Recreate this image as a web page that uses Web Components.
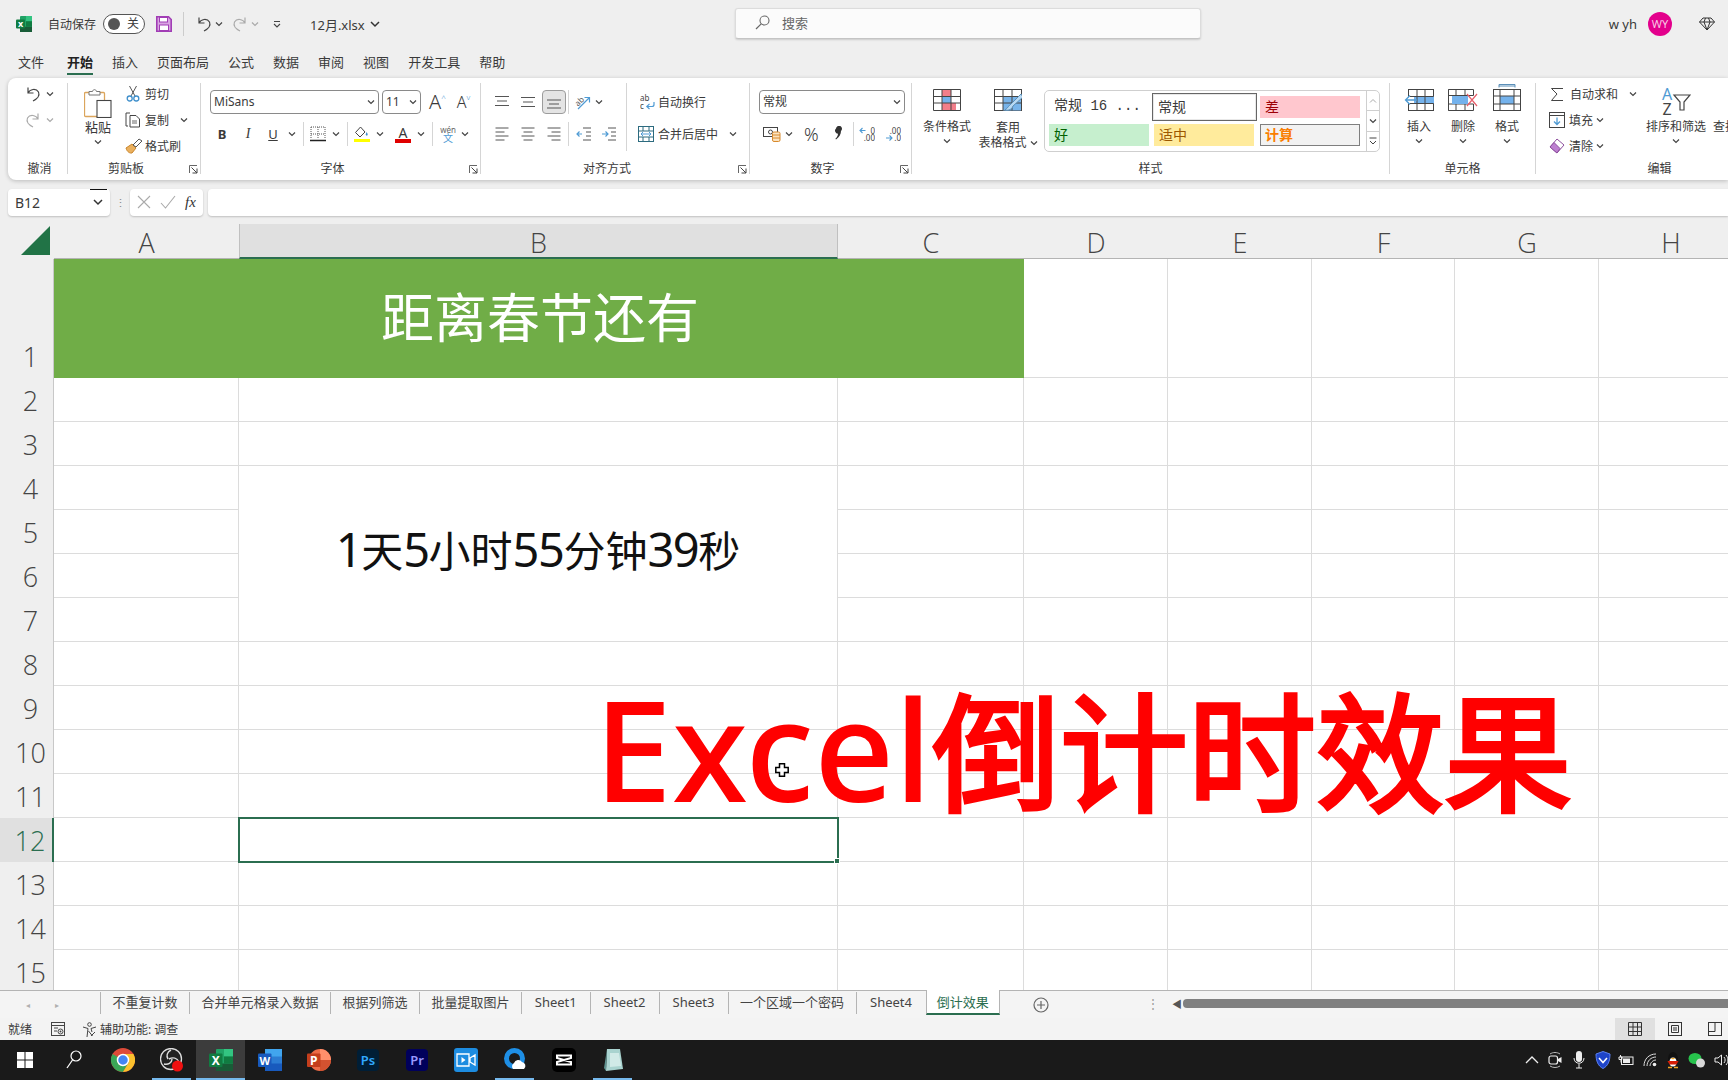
<!DOCTYPE html>
<html lang="zh">
<head>
<meta charset="utf-8">
<title>Excel</title>
<style>
    html, body { margin: 0; padding: 0; }
    body {
        width: 1728px;
        height: 1080px;
        overflow: hidden;
        background: #efefef;
        color: #3a3a3a;
        font-family: "Noto Sans", "Noto Sans CJK SC", sans-serif;
        font-size: 12px;
        display: flex;
        flex-direction: column;
    }
</style>
</head>
<body>
<x-titlebar></x-titlebar>
<x-menubar></x-menubar>
<x-ribbon></x-ribbon>
<x-formulabar></x-formulabar>
<x-sheet></x-sheet>
<x-tabbar></x-tabbar>
<x-statusbar></x-statusbar>
<x-taskbar></x-taskbar>

<script>
const BL = '#4f9bd4';
const GREEN = '#2b6e50';
const TXT = 'font-family="Noto Sans,sans-serif"';
// name: [width, height, svg inner]
const ICONS = {
    chev: [8, 8, `<path d="M1 2.5l3 3 3-3" fill="none" stroke="#444" stroke-width="1.2"/>`],
    chevg: [8, 8, `<path d="M1 2.5l3 3 3-3" fill="none" stroke="#aaa" stroke-width="1.2"/>`],
    chev10: [10, 8, `<path d="M1 2l4 4 4-4" fill="none" stroke="#333" stroke-width="1.5"/>`],
    undo: [16, 16, `<path d="M3 1.5V7h5.5M3 7C5 3 11 2 13.5 6c1.6 3.5-1.5 7-5.5 9" fill="none" stroke="#444" stroke-width="1.2"/>`],
    redo: [16, 16, `<path d="M13 1.5V7H7.5M13 7C11 3 5 2 2.5 6c-1.6 3.5 1.5 7 5.5 9" fill="none" stroke="#aaa" stroke-width="1.2"/>`],
    qat: [10, 10, `<path d="M2 2.5h6M2 5l3 3 3-3" fill="none" stroke="#444" stroke-width="1.1"/>`],
    xl: [16, 16, `<rect x="4" y="0" width="12" height="16" rx="1" fill="#21a366"/><rect x="10" y="0" width="6" height="5.3" fill="#33c481"/><rect x="4" y="10.7" width="12" height="5.3" fill="#185c37"/><rect x="10" y="5.3" width="6" height="5.4" fill="#107c41"/><rect x="0" y="3.5" width="9" height="9" rx="1" fill="#107c41"/><text x="4.5" y="10.8" text-anchor="middle" font-size="9" font-weight="700" fill="#fff" ${TXT}>x</text>`],
    save: [16, 16, `<path d="M.8.8h11.7l2.7 2.7v11.7H.8z" fill="#d9a6e2" stroke="#a13db5" stroke-width="1.6"/><rect x="3.5" y="1.5" width="8" height="4.5" fill="#fff" stroke="#a13db5"/><rect x="3.5" y="9" width="9" height="5.5" fill="#fff" stroke="#a13db5"/>`],
    search: [15, 15, `<circle cx="9.5" cy="5.5" r="4.5" fill="none" stroke="#666" stroke-width="1.1"/><path d="M6.2 8.8L1 14" stroke="#666" stroke-width="1.2"/>`],
    gem: [16, 14, `<path d="M4 1h8l3.5 4L8 13 .5 5zM.5 5h15M5 5l3 8 3-8M5 5l1.5-4M11 5L9.5 1" fill="none" stroke="#333" stroke-width="1"/>`],
    paste: [28, 30, `<rect x=".5" y="4.5" width="20" height="24" rx="1" fill="#fff" stroke="#dba55c" stroke-width="1.3"/><path d="M5 7V3.5h3.5C9 1 12 1 12.5 3.5H16V7z" fill="#fff" stroke="#777"/><rect x="13" y="12.5" width="14" height="17" fill="#fff" stroke="#444" stroke-width="1.1"/>`],
    cut: [14, 16, `<path d="M3.5 0l5.5 10M10.5 0L5 10" stroke="#555" fill="none"/><circle cx="3.7" cy="12.5" r="2.5" fill="none" stroke="#3f8fcb" stroke-width="1.3"/><circle cx="10.3" cy="12.5" r="2.5" fill="none" stroke="#3f8fcb" stroke-width="1.3"/>`],
    copy: [16, 16, `<path d="M5 1H1v13h2" fill="none" stroke="#444"/><path d="M5 3.5h6l3.5 3.5v8H5z" fill="#fff" stroke="#444"/><path d="M7 9h5M7 11h5" stroke="#666"/>`],
    brush: [18, 16, `<path d="M1 10l6-4 4 4-4 5c-2 .5-5-1-6-5z" fill="#eab05e" stroke="#c8842a"/><path d="M8 7l6-6 3 2-6 6z" fill="#fff" stroke="#555"/>`],
    border: [16, 16, `<path d="M1 1h14M1 8h14M1 1v12M8 1v12M15 1v12" stroke="#555" stroke-dasharray="1 1" fill="none"/><path d="M0 14.5h16" stroke="#222" stroke-width="1.3"/>`],
    fill: [16, 16, `<path d="M6.5 1L1.5 6.5 6 11l5-5z" fill="#fff" stroke="#444"/><path d="M12.5 6c1 1.5 1.5 2.3 1 3.3-.7.7-1.8.2-1.8-.8z" fill="#3f8fcb"/><rect y="13" width="16" height="3.5" fill="#ffff00"/>`],
    al1: [16, 16, `<path d="M1 2.5h14M3 7h10M1 11.5h14" stroke="#555" fill="none"/>`],
    al2: [16, 16, `<path d="M1 3.5h14M3 8h10M1 12.5h14" stroke="#555" fill="none"/>`],
    al3: [16, 16, `<path d="M1 6h14M3 10h10M1 14h14" stroke="#555" fill="none"/>`],
    left: [16, 16, `<path d="M1.5 2h13M1.5 6h9M1.5 10h13M1.5 14h9" stroke="#555" fill="none"/>`],
    center: [16, 16, `<path d="M1.5 2h13M3.5 6h9M1.5 10h13M3.5 14h9" stroke="#555" fill="none"/>`],
    right: [16, 16, `<path d="M1.5 2h13M5.5 6h9M1.5 10h13M5.5 14h9" stroke="#555" fill="none"/>`],
    orient: [16, 16, `<text x="5" y="10" transform="rotate(-45 5 8)" text-anchor="middle" font-size="8" fill="#555" ${TXT}>ab</text><path d="M3 15L14 4M9.5 3.5H14.5V8.5" fill="none" stroke="${BL}" stroke-width="1.2"/>`],
    outdent: [16, 16, `<path d="M7 2h8M10 6h5M10 10h5M7 14h8" stroke="#555"/><path d="M6 8H1M3.5 5.5L1 8l2.5 2.5" fill="none" stroke="${BL}" stroke-width="1.2"/>`],
    indent: [16, 16, `<path d="M7 2h8M10 6h5M10 10h5M7 14h8" stroke="#555"/><path d="M1 8h6M4.5 5.5L7 8l-2.5 2.5" fill="none" stroke="${BL}" stroke-width="1.2"/>`],
    wrap: [16, 16, `<text x="0" y="7" font-size="8" fill="#444" ${TXT}>ab</text><text x="0" y="15" font-size="8" fill="#444" ${TXT}>c</text><path d="M14 8v2.5a2 2 0 0 1-2 2H7M9.5 9.8L6.8 12.5 9.5 15" fill="none" stroke="${BL}" stroke-width="1.2"/>`],
    merge: [16, 16, `<rect x=".5" y=".5" width="15" height="15" fill="#fff" stroke="#2c6b7f"/><path d="M.5 5h15M.5 11h15M5 .5V5M11 .5V5M5 11v4.5M11 11v4.5" stroke="#2c6b7f" fill="none"/><path d="M3 8h10M5 6L3 8l2 2M11 6l2 2-2 2" fill="none" stroke="${BL}"/>`],
    money: [18, 16, `<rect x=".5" y="1.5" width="14" height="9" fill="#fff" stroke="#444"/><circle cx="7.5" cy="6" r="2" fill="none" stroke="#444"/><rect x="9.5" y="6" width="7.5" height="9.5" rx="1.5" fill="#fbe3c0" stroke="#d88a2d"/><path d="M9.5 9h7.5M9.5 12h7.5" stroke="#d88a2d"/>`],
    comma: [16, 16, `<path d="M6 2.5a3 3 0 1 1 5 2.5c0 3-1.5 6-5 8.5l-.6-.8c1.5-1.3 2.5-3 2.6-5A3 3 0 0 1 6 2.5z" fill="#333"/>`],
    deca: [16, 16, `<path d="M6.5 4.5H1M3.5 2L1 4.5 3.5 7" fill="none" stroke="${BL}" stroke-width="1.1"/><text x="16" y="7.5" text-anchor="end" font-size="8" fill="#444" ${TXT}>0</text><text x="16" y="15" text-anchor="end" font-size="8" fill="#444" ${TXT}>.00</text>`],
    decb: [16, 16, `<text x="16" y="7.5" text-anchor="end" font-size="8" fill="#444" ${TXT}>.00</text><path d="M1 12h6M4.5 9.5L7 12l-2.5 2.5" fill="none" stroke="${BL}" stroke-width="1.1"/><text x="16" y="15" text-anchor="end" font-size="8" fill="#444" ${TXT}>.0</text>`],
    cf: [28, 22, `<rect x=".5" y=".5" width="27" height="21" fill="#fff"/><rect x="9" y="1" width="9" height="6.5" fill="#f27e8a"/><rect x="9" y="7.5" width="9" height="6.5" fill="#74b2ec"/><rect x="9" y="14" width="14" height="7.5" fill="#f27e8a"/><path d="M.5 .5h27v21H.5zM9 .5v21M18 .5v21M.5 7.5h27M.5 14h27" stroke="#444" fill="none"/>`],
    tbl: [28, 22, `<rect x=".5" y=".5" width="27" height="21" fill="#fff" stroke="#444"/><rect x="9" y="7.5" width="18" height="14" fill="#78b4ea"/><path d="M9 .5v21M18 .5v21M.5 7.5h27M.5 14h27" stroke="#444" fill="none"/><path d="M27 5L17 15c-2 1-3 4-6 6 4 1 7-1 8-4L29 8z" fill="#b9d9f2" stroke="#5b8fb8"/>`],
    cins: [30, 22, `<rect x="4.5" y=".5" width="25" height="21" fill="#fff" stroke="#444"/><rect x="10" y="7.5" width="20" height="7" fill="#74b2ec"/><path d="M13 .5v21M21 .5v21M4.5 7.5h25M4.5 14.5h25" stroke="#444" fill="none"/><path d="M13 11H1.5M6 6.5L1.5 11 6 15.5" fill="#fff" stroke="${BL}" stroke-width="1.3"/>`],
    cdel: [30, 22, `<path d="M.5 .5h25v6h-25zM.5 15h25v6.5H.5z" fill="#fff" stroke="#444"/><path d="M8 .5v21M17 .5v21M.5 .5v21" stroke="#444" fill="none"/><rect x="4" y="7" width="16" height="8" fill="#74b2ec"/><path d="M19 5l10 12M29 5L19 17" stroke="#e8606c" stroke-width="1.2"/>`],
    cfmt: [28, 28, `<path d="M6 .5h16M6 .5v3M22 .5v3M6 2h16" stroke="#5b8fb8" fill="none"/><rect x=".5" y="5.5" width="27" height="21" fill="#fff" stroke="#444"/><rect x="7" y="12" width="14" height="8" fill="#74b2ec"/><path d="M7 5.5v21M21 5.5v21M.5 12h27M.5 20h27" stroke="#444" fill="none"/>`],
    sum: [14, 14, `<path d="M13 1.5H1.5L7 7l-5.5 6.5H13" fill="none" stroke="#444"/>`],
    filld: [16, 16, `<rect x=".5" y=".5" width="15" height="15" fill="#fff" stroke="#444"/><path d="M.5 3.5h15" stroke="#444"/><path d="M8 5.5v7M5 9.5l3 3 3-3" fill="none" stroke="${BL}" stroke-width="1.3"/>`],
    erase: [16, 16, `<path d="M1 9l7-8 7 6-7 8z" fill="#fff" stroke="#8d4f9e"/><path d="M1 9l4-4.5 6 6L8 15z" fill="#bd7fd0" stroke="#8d4f9e"/>`],
    sort: [30, 28, `<text x="6" y="12" text-anchor="middle" font-size="16" fill="#4f9bd4" ${TXT}>A</text><text x="6" y="27" text-anchor="middle" font-size="16" fill="#444" ${TXT}>Z</text><path d="M13 7h16l-6 7v8h-4v-8z" fill="#fff" stroke="#444" stroke-width="1.2"/>`],
    launch: [9, 9, `<path d="M.5 8V.5H8" fill="none" stroke="#666"/><path d="M2.5 2.5L8 8M8 3.5V8H3.5" fill="none" stroke="#444"/>`],
    gup: [8, 8, `<path d="M1 5.5l3-3 3 3" fill="none" stroke="#aaa"/>`],
    gmore: [8, 9, `<path d="M.5 1h7M1 4l3 3 3-3" fill="none" stroke="#444"/>`],
    close: [14, 14, `<path d="M1 1l12 12M13 1L1 13" stroke="#aaa" stroke-width="1.1"/>`],
    check: [16, 14, `<path d="M1 8l4.5 5L15 1" fill="none" stroke="#aaa" stroke-width="1.1"/>`],
    plus: [16, 16, `<circle cx="8" cy="8" r="7" fill="none" stroke="#666" stroke-width="1.2"/><path d="M8 4v8M4 8h8" stroke="#666" stroke-width="1.2"/>`],
    macro: [14, 14, `<rect x=".5" y=".5" width="13" height="13" fill="none" stroke="#444"/><path d="M.5 3.5h13M3 6h4M3 9h3" stroke="#444"/><circle cx="9.5" cy="9.5" r="2.5" fill="none" stroke="#444"/><circle cx="9.5" cy="9.5" r="1" fill="#444"/>`],
    access: [15, 15, `<circle cx="7.5" cy="2.5" r="1.8" fill="none" stroke="#444"/><path d="M1 5l5 1.5L5 15M14 5L9 6.5 10 10M6.5 9l4 5M13 10l-4 4" fill="none" stroke="#444"/>`],
    vnormal: [14, 14, `<path d="M.5 .5h13v13H.5zM.5 5h13M.5 9.5h13M5 .5v13M9.5 .5v13" fill="none" stroke="#333"/>`],
    vpage: [14, 14, `<rect x=".5" y=".5" width="13" height="13" fill="none" stroke="#333"/><path d="M3.5 3.5h7v7h-7zM5 6h4M5 8h4" fill="none" stroke="#333"/>`],
    vbreak: [14, 14, `<rect x=".5" y=".5" width="13" height="13" fill="none" stroke="#333"/><path d="M.5 9.5H7V.5" fill="none" stroke="#333"/>`],
    cursor: [14, 14, `<path d="M4.5 .8h5v3.7h3.7v5H9.5v3.7h-5V9.5H.8v-5h3.7z" fill="#fff" stroke="#000" stroke-width="1.5"/>`],
    win: [16, 16, `<path d="M0 0h7.5v7.5H0zM8.5 0H16v7.5H8.5zM0 8.5h7.5V16H0zM8.5 8.5H16V16H8.5z" fill="#fff"/>`],
    tsearch: [16, 20, `<circle cx="10" cy="6" r="5" fill="none" stroke="#fff" stroke-width="1.2"/><path d="M6.5 10L1 18" stroke="#fff" stroke-width="1.3"/>`],
    chrome: [24, 24, `<circle cx="12" cy="12" r="12" fill="#dd4b39"/><path d="M12 12L1.6 6A12 12 0 0 0 12 24l6-10z" fill="#3aa757"/><path d="M12 6h10.4A12 12 0 0 1 12 24l6-10z" fill="#fbc02d"/><circle cx="12" cy="12" r="5.5" fill="#4285f4" stroke="#fff" stroke-width="1.5"/>`],
    obs: [24, 24, `<circle cx="11" cy="11" r="10.5" fill="#222" stroke="#ddd" stroke-width="1.3"/><path d="M11 2c-4 2-5 6-3 9M19 14c-2-4-6-5-10-3M4 16c4 1 8-1 8-5" fill="none" stroke="#ddd" stroke-width="1.4"/><circle cx="17.5" cy="18" r="5.5" fill="#f01010"/>`],
    txl: [24, 24, `<rect x="7" y="1" width="17" height="22" rx="1" fill="#21a366"/><rect x="15" y="1" width="9" height="7.5" fill="#33c481"/><rect x="7" y="15.5" width="17" height="7.5" fill="#185c37"/><rect x="15" y="8.5" width="9" height="7" fill="#107c41"/><rect x="0" y="5.5" width="13.5" height="13.5" rx="1" fill="#107c41"/><text x="6.8" y="16.5" text-anchor="middle" font-size="12" font-weight="700" fill="#fff" ${TXT}>X</text>`],
    word: [24, 24, `<rect x="7" y="1" width="17" height="22" rx="1" fill="#2b7cd3"/><rect x="7" y="1" width="17" height="7.5" fill="#41a5ee"/><rect x="7" y="15.5" width="17" height="7.5" fill="#185abd"/><rect x="0" y="5.5" width="13.5" height="13.5" rx="1" fill="#185abd"/><text x="6.8" y="16.5" text-anchor="middle" font-size="11" font-weight="700" fill="#fff" ${TXT}>W</text>`],
    ppt: [24, 24, `<circle cx="13" cy="12" r="11" fill="#ed6c47"/><path d="M13 1a11 11 0 0 1 11 11H13z" fill="#ff8f6b"/><path d="M13 12h11a11 11 0 0 1-11 11z" fill="#d35230"/><rect x="0" y="5.5" width="13.5" height="13.5" rx="1" fill="#c43e1c"/><text x="6.8" y="16.5" text-anchor="middle" font-size="12" font-weight="700" fill="#fff" ${TXT}>P</text>`],
    ps: [24, 24, `<rect x="1" y="1" width="22" height="22" rx="4" fill="#001e36"/><text x="12" y="17" text-anchor="middle" font-size="13" font-weight="600" fill="#31a8ff" ${TXT}>Ps</text>`],
    pr: [24, 24, `<rect x="1" y="1" width="22" height="22" rx="4" fill="#00005b"/><text x="12" y="17" text-anchor="middle" font-size="13" font-weight="600" fill="#9999ff" ${TXT}>Pr</text>`],
    video: [24, 24, `<rect width="24" height="24" rx="3" fill="#1d8ce0"/><path d="M3 6h12v12H3zM16 10l5-3v10l-5-3z" fill="none" stroke="#fff" stroke-width="1.3"/><path d="M7.5 9l4 3-4 3z" fill="#fff"/>`],
    qq: [24, 24, `<circle cx="11.5" cy="10.5" r="8" fill="none" stroke="#1e8fe6" stroke-width="5"/><path d="M10 21a4 4 0 0 1 1-6 4.5 4.5 0 0 1 8-1 4 4 0 0 1 2 7z" fill="#fff"/>`],
    capcut: [24, 24, `<rect width="24" height="24" rx="5" fill="#000"/><path d="M5 7.5h14V10L5 14v2.5h14V14L5 10z" fill="none" stroke="#fff" stroke-width="2"/>`],
    note: [24, 24, `<path d="M6 1h13l3 20-17 2z" fill="#a9d3cf"/><path d="M6 1l-3 19 2 3z" fill="#5e9390"/><path d="M9 5h9l2 13-11 1z" fill="#e2f3f1" opacity=".7"/>`],
    tup: [14, 10, `<path d="M1 8l6-6 6 6" fill="none" stroke="#eee" stroke-width="1.3"/>`],
    tcam: [14, 18, `<path d="M2 3c3-2 7-2 10 0M2 15c3 2 7 2 10 0" fill="none" stroke="#bbb"/><rect x="1" y="5" width="8.5" height="8" rx="2" fill="none" stroke="#eee" stroke-width="1.2"/><path d="M10 8l3.5-2v6L10 10z" fill="#eee"/>`],
    tmic: [12, 18, `<rect x="3" y="0" width="6" height="11" rx="3" fill="#eee"/><path d="M1 7c0 7 10 7 10 0M6 13v4M3 17h6" fill="none" stroke="#eee"/>`],
    tshield: [16, 18, `<path d="M8 .5l7 2.5c0 7-2 12-7 14.5C3 15 1 10 1 3z" fill="#1e44c8" stroke="#5a80f0"/><path d="M4 7l4 4.5L12 7" fill="none" stroke="#fff" stroke-width="1.5"/>`],
    tbat: [16, 12, `<path d="M1 3h3v2.5H1zM2.5 1v2M3 5.5v3" stroke="#eee" fill="none"/><rect x="3.5" y="3" width="11.5" height="7.5" fill="none" stroke="#eee"/><rect x="5" y="4.5" width="7" height="4.5" fill="#eee"/>`],
    twifi: [14, 14, `<path d="M1 13C1 6 6 1 13 1M4 13c0-5 4-9 9-9M7 13c0-3 3-6 6-6" fill="none" stroke="#ddd"/><circle cx="11.5" cy="11.5" r="1.8" fill="#eee"/>`],
    tqq: [16, 18, `<ellipse cx="8" cy="8" rx="5" ry="7" fill="#111"/><ellipse cx="8" cy="11" rx="3.5" ry="4.5" fill="#fff"/><path d="M2.5 10l11 0-2 3.5h-7z" fill="#d81e06"/><path d="M5.5 7l2.5 1.5L10.5 7z" fill="#f5a623"/><path d="M3 16.5h4M9 16.5h4" stroke="#f5a623" stroke-width="1.5"/>`],
    twx: [18, 16, `<ellipse cx="7" cy="6.5" rx="6.5" ry="5.5" fill="#27c24c"/><circle cx="12.5" cy="11" r="4.5" fill="#d8d8d8"/>`],
    tvol: [14, 14, `<path d="M1 5h3l3.5-3v10L4 9H1z" fill="none" stroke="#eee"/><path d="M10 4c1.5 2 1.5 4 0 6M12 2c2.500 3 2.500 7 0 10" fill="none" stroke="#eee"/>`]
};

class XIcon extends HTMLElement {
    connectedCallback() {
        const shadow = this.shadowRoot || this.attachShadow({mode: 'open'});
        const [w, h, inner] = ICONS[this.getAttribute('n')];
        shadow.innerHTML = `
            <style>
                :host { display: inline-flex; flex: none; line-height: 0; }
            </style>
            <svg width="${w}" height="${h}" viewBox="0 0 ${w} ${h}">${inner}</svg>`;
    }
}

class XSelect extends HTMLElement {
    constructor() {
        super();
        this.attachShadow({mode: 'open'});
        this.shadowRoot.innerHTML = `
            <style>
                :host {
                    display: flex;
                    align-items: center;
                    justify-content: space-between;
                    box-sizing: border-box;
                    height: 24px;
                    padding: 0 3px;
                    background: #fff;
                    border: 1px solid #8a8a8a;
                    border-radius: 4px;
                    font-size: 12px;
                    line-height: 22px;
                }
            </style>
            <slot></slot><x-icon n="chev"></x-icon>`;
    }
}

class XGroup extends HTMLElement {
    constructor() {
        super();
        this.attachShadow({mode: 'open'});
        this.shadowRoot.innerHTML = `
            <style>
                :host {
                    display: flex;
                    flex-direction: column;
                    flex: none;
                    box-sizing: border-box;
                    height: 91px;
                    margin: 5px 0 6px;
                    border-right: 1px solid #d5d5d5;
                }
                .body { display: flex; flex: 1; min-height: 0; }
                .foot {
                    display: flex;
                    align-items: flex-start;
                    flex: none;
                    height: 12px;
                    padding-top: 1px;
                    margin-bottom: -1px;
                    line-height: 12px;
                    font-size: 12px;
                    white-space: nowrap;
                }
                .foot span { flex: 1; text-align: center; padding-left: var(--label-shift, 0); }
                .foot x-icon { width: 14px; justify-content: flex-end; margin: 2px 2px 0 0; }
            </style>
            <div class="body"><slot></slot></div>
            <div class="foot"><span id="t"></span></div>`;
    }
    connectedCallback() {
        this.shadowRoot.getElementById('t').textContent = this.getAttribute('label');
        if (this.hasAttribute('launch')) {
            const i = document.createElement('x-icon');
            i.setAttribute('n', 'launch');
            this.shadowRoot.querySelector('.foot').appendChild(i);
        }
    }
}

class XBigBtn extends HTMLElement {
    constructor() {
        super();
        this.attachShadow({mode: 'open'});
        this.shadowRoot.innerHTML = `
            <style>
                :host {
                    display: flex;
                    flex-direction: column;
                    align-items: center;
                    flex: none;
                    padding-top: 6px;
                    font-size: 12px;
                    line-height: 14px;
                    white-space: nowrap;
                    text-align: center;
                }
                .ic { height: 31px; display: flex; align-items: flex-start; }
                .ar { height: 14px; display: flex; align-items: center; }
            </style>
            <div class="ic"><slot></slot></div>
            <slot name="label"></slot>
            <div class="ar" id="ar"><x-icon n="chev"></x-icon></div>`;
    }
    connectedCallback() {
        if (this.hasAttribute('noarrow')) this.shadowRoot.getElementById('ar').remove();
    }
}

class XTitlebar extends HTMLElement {
    constructor() {
        super();
        this.attachShadow({mode: 'open'});
        this.shadowRoot.innerHTML = `
            <style>
                :host {
                    display: flex;
                    flex: none;
                    align-items: center;
                    height: 48px;
                    font-size: 12px;
                    white-space: nowrap;
                }
                .left { display: flex; align-items: center; width: 735px; flex: none; padding-left: 16px; box-sizing: border-box; }
                .toggle {
                    display: flex;
                    align-items: center;
                    box-sizing: border-box;
                    width: 42px;
                    height: 20px;
                    margin-left: 7px;
                    padding: 0 4px;
                    border: 1px solid #555;
                    border-radius: 10px;
                    background: #fff;
                    gap: 7px;
                    font-size: 12px;
                    line-height: 18px;
                }
                .toggle i { width: 12px; height: 12px; border-radius: 50%; background: #555; }
                .sep { width: 1px; height: 24px; background: #ccc; margin: 0 12px 0 11px; }
                .search {
                    display: flex;
                    align-items: center;
                    box-sizing: border-box;
                    width: 466px;
                    height: 31px;
                    margin-top: -1px;
                    padding: 0 0 2px 19px;
                    gap: 12px;
                    background: #fbfbfb;
                    border-radius: 3px;
                    border: 1px solid #dcdcdc;
                    border-bottom-color: #c4c4c4;
                    box-shadow: 0 1px 2px rgba(0,0,0,.15);
                    color: #666;
                    font-size: 13px;
                }
                .right { display: flex; align-items: center; flex: 1; justify-content: flex-end; padding-right: 13px; }
                .avatar {
                    width: 24px;
                    height: 24px;
                    margin: 0 27px 0 11px;
                    border-radius: 50%;
                    background: #e3008c;
                    color: #f8c8e4;
                    font-size: 11px;
                    line-height: 24px;
                    text-align: center;
                }
            </style>
            <div class="left">
                <x-icon n="xl"></x-icon>
                <span style="margin-left:16px">自动保存</span>
                <div class="toggle"><i></i><span>关</span></div>
                <x-icon n="save" style="margin-left:11px"></x-icon>
                <div class="sep"></div>
                <x-icon n="undo"></x-icon>
                <x-icon n="chev" style="margin-left:3px"></x-icon>
                <x-icon n="redo" style="margin-left:9px"></x-icon>
                <x-icon n="chevg" style="margin-left:3px"></x-icon>
                <x-icon n="qat" style="margin-left:13px"></x-icon>
                <span style="margin-left:28px;font-size:13px">12月.xlsx</span>
                <x-icon n="chev10" style="margin-left:5px"></x-icon>
            </div>
            <div class="search"><x-icon n="search"></x-icon><span>搜索</span></div>
            <div class="right">
                <span style="font-size:13px">w yh</span>
                <div class="avatar">WY</div>
                <x-icon n="gem"></x-icon>
            </div>`;
    }
}

class XMenubar extends HTMLElement {
    constructor() {
        super();
        this.attachShadow({mode: 'open'});
        const items = ['文件', '开始', '插入', '页面布局', '公式', '数据', '审阅', '视图', '开发工具', '帮助'];
        this.shadowRoot.innerHTML = `
            <style>
                :host {
                    display: flex;
                    flex: none;
                    align-items: flex-start;
                    height: 30px;
                    padding-left: 18px;
                    gap: 19px;
                    font-size: 13px;
                }
                span {
                    box-sizing: border-box;
                    height: 27px;
                    padding-top: 4px;
                    line-height: 20px;
                    border-bottom: 2px solid transparent;
                }
                .on { font-weight: 700; margin-left: 4px; border-bottom-color: ${GREEN}; color: #222; }
            </style>
            ${items.map((t, i) => `<span class="${i == 1 ? 'on' : ''}">${t}</span>`).join('')}`;
    }
}

class XRibbon extends HTMLElement {
    constructor() {
        super();
        this.attachShadow({mode: 'open'});
        this.shadowRoot.innerHTML = `
            <style>
                :host {
                    display: flex;
                    flex: none;
                    height: 102px;
                    margin-left: 8px;
                    background: #fff;
                    border-radius: 8px 0 0 8px;
                    box-shadow: 0 1px 4px rgba(0,0,0,.22);
                    overflow: hidden;
                    font-size: 12px;
                    white-space: nowrap;
                }
                .col { display: flex; flex-direction: column; flex: none; }
                .r22 { display: flex; align-items: center; height: 22px; margin-bottom: 4px; }
                .two { padding-top: 7px; gap: 8px; }
                .r24 { display: flex; align-items: center; height: 24px; }
                .sv { flex: none; width: 1px; height: 24px; background: #d5d5d5; }
                .b { width: 24px; text-align: center; line-height: 24px; flex: none; font-size: 13px; }
                .on { box-sizing: border-box; width: 24px; height: 24px; display: flex; align-items: center; justify-content: center; background: #e4e4e4; border: 1px solid #9c9c9c; border-radius: 4px; }
                .bar { display: flex; flex-direction: column; align-items: center; width: 16px; flex: none; }
                .bar i { display: block; width: 16px; height: 4px; }
                .gal {
                    box-sizing: border-box;
                    display: flex;
                    width: 336px;
                    height: 62px;
                    margin: 7px 0 0 6px;
                    border: 1px solid #cfcfcf;
                    border-radius: 5px;
                    overflow: hidden;
                    flex: none;
                }
                .cells {
                    display: grid;
                    grid-template-columns: 100px 105px 100px;
                    grid-template-rows: 22px 22px;
                    column-gap: 3px;
                    row-gap: 6px;
                    padding: 5px 0 0 4px;
                    width: 321px;
                    box-sizing: border-box;
                    font-size: 14px;
                    line-height: 21px;
                }
                .cells div { padding-left: 5px; }
                .sel { box-sizing: border-box; border: 1px solid #666; box-shadow: inset 0 0 0 1px #e8e8e8; margin: -3px 0; line-height: 25px; }
                .scr { display: flex; flex-direction: column; flex: 1; border-left: 1px solid #cfcfcf; }
                .scr div { flex: 1; display: flex; align-items: center; justify-content: center; border-bottom: 1px solid #cfcfcf; }
                .scr div:last-child { border-bottom: 0; }
                .wen { display: flex; flex-direction: column; align-items: center; width: 16px; flex: none; line-height: 9px; font-size: 8px; color: #666; }
                .wen b { font-weight: 400; font-size: 10px; color: ${BL}; }
            </style>

            <x-group label="撤消" style="width:60px;--label-shift:4px">
                <div class="col" style="padding-left:17px">
                    <div class="r22"><x-icon n="undo"></x-icon><x-icon n="chev" style="margin-left:5px"></x-icon></div>
                    <div class="r22"><x-icon n="redo"></x-icon><x-icon n="chevg" style="margin-left:5px"></x-icon></div>
                </div>
            </x-group>

            <x-group label="剪贴板" launch style="width:133px">
                <x-bigbtn style="width:40px;margin:-1px 0 0 10px">
                    <x-icon n="paste"></x-icon>
                    <span slot="label" style="line-height:16px;font-size:13px">粘贴</span>
                </x-bigbtn>
                <div class="col" style="margin-left:7px">
                    <div class="r22"><x-icon n="cut" style="margin:0 1px"></x-icon><span style="margin-left:4px">剪切</span></div>
                    <div class="r22"><x-icon n="copy"></x-icon><span style="margin-left:4px">复制</span><x-icon n="chev" style="margin-left:11px"></x-icon></div>
                    <div class="r22"><x-icon n="brush" style="margin-right:-2px"></x-icon><span style="margin-left:4px">格式刷</span></div>
                </div>
            </x-group>

            <x-group label="字体" launch style="width:280px">
                <div class="col two" style="padding-left:9px">
                    <div class="r24">
                        <x-select style="width:169px">MiSans</x-select>
                        <x-select style="width:39px;margin-left:3px">11</x-select>
                        <span style="margin-left:8px;font-size:20px;font-weight:300;line-height:24px;display:flex">A<span style="font-size:8px;line-height:16px;color:${BL}">^</span></span>
                        <span style="margin-left:11px;font-size:16px;font-weight:300;line-height:24px;display:flex">A<span style="font-size:8px;line-height:14px;color:${BL}">v</span></span>
                    </div>
                    <div class="r24">
                        <span class="b" style="font-weight:700">B</span>
                        <span class="b" style="margin-left:2px;font-style:italic;font-family:'Liberation Serif',serif;font-size:14px">I</span>
                        <span class="b" style="margin-left:1px;text-decoration:underline">U</span>
                        <x-icon n="chev" style="margin-left:3px"></x-icon>
                        <i class="sv" style="margin-left:7px"></i>
                        <x-icon n="border" style="margin-left:6px"></x-icon>
                        <x-icon n="chev" style="margin-left:6px"></x-icon>
                        <i class="sv" style="margin-left:7px"></i>
                        <x-icon n="fill" style="margin-left:6px"></x-icon>
                        <x-icon n="chev" style="margin-left:6px"></x-icon>
                        <div class="bar" style="margin-left:11px"><span style="font-size:14px;line-height:13px">A</span><i style="background:#e00000"></i></div>
                        <x-icon n="chev" style="margin-left:6px"></x-icon>
                        <i class="sv" style="margin-left:7px"></i>
                        <div class="wen" style="margin-left:7px"><span>wén</span><b>文</b></div>
                        <x-icon n="chev" style="margin-left:5px"></x-icon>
                    </div>
                </div>
            </x-group>

            <x-group label="对齐方式" launch style="width:269px">
                <div class="col two" style="width:146px;height:68px;box-sizing:border-box;padding-left:13px;border-right:1px solid #d5d5d5">
                    <div class="r24">
                        <x-icon n="al1"></x-icon>
                        <x-icon n="al2" style="margin-left:10px"></x-icon>
                        <div class="on" style="margin-left:6px"><x-icon n="al3"></x-icon></div>
                        <i class="sv" style="margin-left:2px"></i>
                        <x-icon n="orient" style="margin-left:6px"></x-icon>
                        <x-icon n="chev" style="margin-left:4px"></x-icon>
                    </div>
                    <div class="r24">
                        <x-icon n="left"></x-icon>
                        <x-icon n="center" style="margin-left:10px"></x-icon>
                        <x-icon n="right" style="margin-left:10px"></x-icon>
                        <i class="sv" style="margin-left:6px"></i>
                        <x-icon n="outdent" style="margin-left:7px"></x-icon>
                        <x-icon n="indent" style="margin-left:9px"></x-icon>
                    </div>
                </div>
                <div class="col two" style="margin-left:11px">
                    <div class="r24"><x-icon n="wrap" style="margin-left:2px"></x-icon><span style="margin-left:2px">自动换行</span></div>
                    <div class="r24"><x-icon n="merge"></x-icon><span style="margin-left:4px">合并后居中</span><x-icon n="chev" style="margin-left:11px"></x-icon></div>
                </div>
            </x-group>

            <x-group label="数字" launch style="width:162px">
                <div class="col two" style="padding-left:9px">
                    <div class="r24"><x-select style="width:146px">常规</x-select></div>
                    <div class="r24">
                        <x-icon n="money" style="margin-left:4px"></x-icon>
                        <x-icon n="chev" style="margin-left:4px"></x-icon>
                        <span style="margin-left:11px;font-size:18px;font-weight:300;width:16px;line-height:24px">%</span>
                        <x-icon n="comma" style="margin-left:10px"></x-icon>
                        <i class="sv" style="margin-left:7px"></i>
                        <x-icon n="deca" style="margin-left:5px"></x-icon>
                        <x-icon n="decb" style="margin-left:10px"></x-icon>
                    </div>
                </div>
            </x-group>

            <x-group label="样式" style="width:478px">
                <x-bigbtn style="width:48px;margin-left:11px">
                    <x-icon n="cf"></x-icon><span slot="label">条件格式</span>
                </x-bigbtn>
                <x-bigbtn noarrow style="width:60px;margin-left:7px">
                    <x-icon n="tbl"></x-icon><span slot="label" style="line-height:15px">套用<br>表格格式 <x-icon n="chev"></x-icon></span>
                </x-bigbtn>
                <div class="gal">
                    <div class="cells">
                        <div style="font-family:'Liberation Mono','Noto Sans CJK SC',monospace">常规 16 ...</div>
                        <div class="sel">常规</div>
                        <div style="background:#ffc7ce;color:#9c0006">差</div>
                        <div style="background:#c6efce;color:#006100">好</div>
                        <div style="background:#ffeb9c;color:#9c5700;margin:0 3px 0 2px">适中</div>
                        <div style="background:#f2f2f2;color:#fa7d00;font-weight:700;outline:1px solid #7f7f7f;outline-offset:-1px">计算</div>
                    </div>
                    <div class="scr">
                        <div><x-icon n="gup"></x-icon></div>
                        <div><x-icon n="chev"></x-icon></div>
                        <div><x-icon n="gmore"></x-icon></div>
                    </div>
                </div>
            </x-group>

            <x-group label="单元格" style="width:146px">
                <x-bigbtn style="width:44px;margin-left:7px"><x-icon n="cins"></x-icon><span slot="label">插入</span></x-bigbtn>
                <x-bigbtn style="width:44px"><x-icon n="cdel"></x-icon><span slot="label">删除</span></x-bigbtn>
                <x-bigbtn style="width:44px;margin-top:-5px"><x-icon n="cfmt"></x-icon><span slot="label" style="margin-top:5px">格式</span></x-bigbtn>
            </x-group>

            <x-group label="编辑" style="width:247px;border-right:0">
                <div class="col" style="width:110px;padding-left:13px;box-sizing:border-box">
                    <div class="r22"><x-icon n="sum" style="margin:0 1px"></x-icon><span style="margin-left:5px">自动求和</span><x-icon n="chev" style="margin-left:11px"></x-icon></div>
                    <div class="r22"><x-icon n="filld"></x-icon><span style="margin-left:4px">填充</span><x-icon n="chev" style="margin-left:3px"></x-icon></div>
                    <div class="r22"><x-icon n="erase"></x-icon><span style="margin-left:4px">清除</span><x-icon n="chev" style="margin-left:3px"></x-icon></div>
                </div>
                <x-bigbtn style="width:60px;margin-top:-1px"><x-icon n="sort"></x-icon><span slot="label" style="margin-top:1px">排序和筛选</span></x-bigbtn>
                <x-bigbtn style="width:60px;margin-left:7px"><span slot="label">查找和选择</span></x-bigbtn>
            </x-group>`;
    }
}

class XFormulabar extends HTMLElement {
    constructor() {
        super();
        this.attachShadow({mode: 'open'});
        this.shadowRoot.innerHTML = `
            <style>
                :host {
                    display: flex;
                    flex: none;
                    align-items: center;
                    height: 28px;
                    margin: 8px 0 0 8px;
                }
                .box {
                    box-sizing: border-box;
                    height: 27px;
                    background: #fff;
                    border-radius: 4px;
                    box-shadow: 0 1px 2px rgba(0,0,0,.2);
                    display: flex;
                    align-items: center;
                }
                .name { width: 102px; padding: 0 7px; justify-content: space-between; font-size: 14px; position: relative; }
                .name::before { content: ""; position: absolute; left: 82px; top: 0; width: 17px; height: 1px; background: #111; }
                .dots { width: 20px; text-align: center; color: #888; font-size: 11px; }
                .fx { width: 73px; padding-left: 7px; gap: 9px; }
                .fx em { font-family: "Liberation Serif", serif; font-size: 15px; color: #333; }
                .input { flex: 1; margin-left: 5px; border-radius: 4px 0 0 4px; }
            </style>
            <div class="box name"><span>B12</span><x-icon n="chev10"></x-icon></div>
            <div class="dots">⋮</div>
            <div class="box fx"><x-icon n="close"></x-icon><x-icon n="check"></x-icon><em>fx</em></div>
            <div class="box input"></div>`;
    }
}

class XSheet extends HTMLElement {
    constructor() {
        super();
        this.attachShadow({mode: 'open'});
        const cols = 'ABCDEFGHI'.split('');
        let cells = `<div class="hd corner"><svg width="30" height="30" viewBox="0 0 30 30"><path d="M29 0V29H0z" fill="#217346"/></svg></div>`;
        cells += cols.map(c => `<div class="hd col ${c == 'B' ? 'act' : ''}">${c}</div>`).join('');
        for (let r = 1; r <= 15; r++) {
            cells += `<div class="hd row ${r == 12 ? 'act' : ''}">${r}</div>`;
            cols.forEach(c => {
                if (r == 1) {
                    if (c == 'A') cells += `<div class="title">距离春节还有</div>`;
                    else if (c != 'B' && c != 'C') cells += `<div class="c"></div>`;
                } else if (c == 'B' && r == 4) {
                    cells += `<div class="c merged"><b>1</b>天<b>5</b>小时<b>55</b>分钟<b>39</b>秒</div>`;
                } else if (c == 'B' && r > 4 && r < 8) {
                    // covered by the merged cell
                } else if (c == 'B' && r == 12) {
                    cells += `<div class="c sel"><i></i></div>`;
                } else {
                    cells += `<div class="c"></div>`;
                }
            });
        }
        this.shadowRoot.innerHTML = `
            <style>
                :host {
                    display: block;
                    position: relative;
                    flex: none;
                    height: 766px;
                    margin-top: 8px;
                    overflow: hidden;
                }
                .grid {
                    display: grid;
                    grid-template-columns: 54px 185px 599px 186px 144px 144px 143px 144px 144px 1fr;
                    grid-template-rows: 35px 119px repeat(14, 44px);
                }
                .hd {
                    box-sizing: border-box;
                    font-family: "Open Sans", "Noto Sans", sans-serif;
                    font-weight: 300;
                    font-size: 27px;
                    color: #444;
                    text-align: center;
                }
                .corner { display: flex; align-items: flex-end; justify-content: flex-end; padding: 0 3px 3px 0; }
                .col { padding-top: 3px; line-height: 31px; border-bottom: 1px solid #b4b4b4; }
                .row { padding: 3px 0 1px 8px; line-height: 40px; border-right: 1px solid #c8c8c8; display: flex; align-items: flex-end; justify-content: center; }
                .act { background: #e0e0e0; color: ${GREEN}; }
                .col.act { color: #444; border-bottom: 2px solid ${GREEN}; border-left: 1px solid #c0c0c0; border-right: 1px solid #c0c0c0; }
                .row.act { border-right: 2px solid ${GREEN}; }
                .c { box-sizing: border-box; background: #fff; border-right: 1px solid #dcdcdc; border-bottom: 1px solid #dcdcdc; }
                .title {
                    grid-column: span 3;
                    display: flex;
                    align-items: center;
                    justify-content: center;
                    box-sizing: border-box;
                    padding: 0 184px 8px 186px;
                    background: #70ad47;
                    color: #fff;
                    font-size: 53px;
                    font-family: "Noto Sans CJK SC", sans-serif;
                    line-height: 60px;
                }
                .merged {
                    grid-row: span 4;
                    display: flex;
                    align-items: center;
                    justify-content: center;
                    font-family: "Noto Sans CJK SC", sans-serif;
                    font-size: 42px;
                    color: #111;
                    padding-bottom: 10px;
                }
                .merged b { font-family: "Noto Sans", sans-serif; font-weight: 400; font-size: 47px; letter-spacing: -1.5px; }
                .sel { position: relative; outline: 2px solid ${GREEN}; outline-offset: -1px; z-index: 1; }
                .sel i { position: absolute; right: -3px; bottom: -3px; width: 6px; height: 6px; background: ${GREEN}; border: 1px solid #fff; box-sizing: border-box; }
                .big {
                    position: absolute;
                    left: 594px;
                    top: 433px;
                    z-index: 2;
                    color: #ff0000;
                    white-space: nowrap;
                    line-height: 180px;
                    font-size: 128px;
                    font-family: "Noto Sans CJK SC", sans-serif;
                    font-weight: 400;
                    -webkit-text-stroke: 4px #ff0000;
                }
                .big span { font-family: "Noto Sans", sans-serif; font-size: 140px; font-weight: 500; -webkit-text-stroke: 0; }
                .cur { position: absolute; left: 775px; top: 539px; z-index: 3; }
            </style>
            <div class="grid">${cells}</div>
            <div class="big"><span>Excel</span>倒计时效果</div>
            <x-icon class="cur" n="cursor"></x-icon>`;
    }
}

class XTabbar extends HTMLElement {
    constructor() {
        super();
        this.attachShadow({mode: 'open'});
        const tabs = [
            ['不重复计数', 89], ['合并单元格录入数据', 141], ['根据列筛选', 89], ['批量提取图片', 102],
            ['Sheet1', 68.5], ['Sheet2', 69], ['Sheet3', 69], ['一个区域一个密码', 128], ['Sheet4', 70]
        ];
        this.shadowRoot.innerHTML = `
            <style>
                :host {
                    display: flex;
                    flex: none;
                    align-items: stretch;
                    box-sizing: border-box;
                    height: 28px;
                    background: #f4f4f4;
                    border-top: 1px solid #b4b4b4;
                    font-size: 13px;
                    color: #444;
                    white-space: nowrap;
                }
                .nav { width: 100px; flex: none; display: flex; align-items: center; padding-left: 26px; box-sizing: border-box; gap: 25px; color: #b0b0b0; font-size: 8px; }
                .t { box-sizing: border-box; flex: none; text-align: center; line-height: 20px; height: 22px; margin-top: 1px; border-left: 1px solid #b4b4b4; }
                .act {
                    box-sizing: border-box;
                    width: 74.5px;
                    height: 25px;
                    margin-top: -1px;
                    padding-top: 1px;
                    text-align: center;
                    line-height: 22px;
                    background: #fff;
                    color: ${GREEN};
                    border-left: 1px solid #b4b4b4;
                    border-right: 1px solid #b4b4b4;
                    border-bottom: 2px solid ${GREEN};
                    flex: none;
                }
                .thumb { flex: 1; height: 9px; margin: 8px 0 0 1px; background: #808080; border-radius: 4px 0 0 4px; }
            </style>
            <div class="nav"><span>◂</span><span>▸</span></div>
            ${tabs.map(([t, w]) => `<div class="t" style="width:${w}px">${t}</div>`).join('')}
            <div class="act">倒计效果</div>
            <x-icon n="plus" style="margin:6px 0 0 33px;align-self:flex-start"></x-icon>
            <span style="margin:3px 0 0 98px;color:#999;font-size:12px;line-height:20px">⋮</span>
            <span style="margin:3px 0 0 13px;color:#555;font-size:10px;line-height:20px">◀</span>
            <div class="thumb"></div>`;
    }
}

class XStatusbar extends HTMLElement {
    constructor() {
        super();
        this.attachShadow({mode: 'open'});
        this.shadowRoot.innerHTML = `
            <style>
                :host {
                    display: flex;
                    flex: none;
                    align-items: center;
                    box-sizing: border-box;
                    height: 22px;
                    padding-left: 8px;
                    background: #f3f3f3;
                    font-size: 12px;
                    white-space: nowrap;
                }
                .v { display: flex; align-items: center; justify-content: center; box-sizing: border-box; width: 40px; height: 22px; flex: none; }
                .on { background: #e0e0e0; }
            </style>
            <span>就绪</span>
            <x-icon n="macro" style="margin-left:19px"></x-icon>
            <x-icon n="access" style="margin-left:17px"></x-icon>
            <span style="margin-left:3px">辅助功能: 调查</span>
            <span style="flex:1"></span>
            <div class="v on"><x-icon n="vnormal"></x-icon></div>
            <div class="v"><x-icon n="vpage"></x-icon></div>
            <div class="v" style="width:33px;justify-content:flex-start;padding-left:13px"><x-icon n="vbreak"></x-icon></div>`;
    }
}

class XTaskbar extends HTMLElement {
    constructor() {
        super();
        this.attachShadow({mode: 'open'});
        const apps = [['win'], ['tsearch'], ['chrome'], ['obs', 'run'], ['txl', 'act'], ['word'], ['ppt'], ['ps'], ['pr'], ['video'], ['qq', 'run'], ['capcut'], ['note', 'run']];
        const tray = ['tup', 'tcam', 'tmic', 'tshield', 'tbat', 'twifi', 'tqq', 'twx', 'tvol'];
        this.shadowRoot.innerHTML = `
            <style>
                :host {
                    display: flex;
                    flex: none;
                    height: 40px;
                    background: #1a1a1a;
                    overflow: hidden;
                }
                .s { position: relative; display: flex; align-items: center; justify-content: center; width: 49px; height: 40px; flex: none; }
                .act { background: #3c3c3c; }
                .run::after, .act::after { content: ""; position: absolute; left: 5px; right: 5px; bottom: 0; height: 2px; background: #76b9ed; }
                .act::after { left: 0; right: 0; }
                .tray { display: flex; margin-left: auto; width: 208px; overflow: hidden; flex: none; }
                .ti { display: flex; align-items: center; justify-content: center; width: 23.6px; flex: none; height: 40px; }
            </style>
            ${apps.map(([n, c]) => `<div class="s ${c || ''}"><x-icon n="${n}"></x-icon></div>`).join('')}
            <div class="tray">${tray.map(n => `<div class="ti"><x-icon n="${n}"></x-icon></div>`).join('')}</div>`;
    }
}

customElements.define('x-icon', XIcon);
customElements.define('x-select', XSelect);
customElements.define('x-group', XGroup);
customElements.define('x-bigbtn', XBigBtn);
customElements.define('x-titlebar', XTitlebar);
customElements.define('x-menubar', XMenubar);
customElements.define('x-ribbon', XRibbon);
customElements.define('x-formulabar', XFormulabar);
customElements.define('x-sheet', XSheet);
customElements.define('x-tabbar', XTabbar);
customElements.define('x-statusbar', XStatusbar);
customElements.define('x-taskbar', XTaskbar);
</script>
</body>
</html>
